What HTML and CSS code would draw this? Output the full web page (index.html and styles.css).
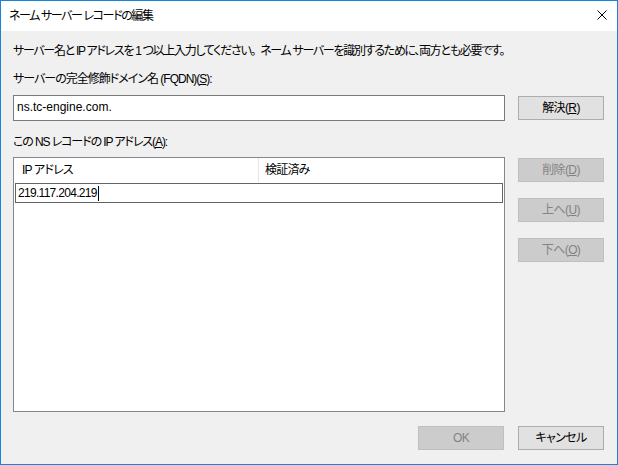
FILE: index.html
```html
<!DOCTYPE html>
<html lang="ja">
<head>
<meta charset="utf-8">
<link rel="stylesheet" href="styles.css">
</head>
<body>
<div class="window">
  <div class="titlebar">
    <span class="title">ネーム サーバー レコードの編集</span>
    <span class="close">
      <svg width="10" height="10" viewBox="0 0 10 10"><path d="M0.5 0.5 L9.5 9.5 M9.5 0.5 L0.5 9.5" stroke="#000" stroke-width="1" fill="none"/></svg>
    </span>
  </div>
  <div class="content">
    <div class="desc">サーバー名と IP アドレスを 1 つ以上入力してください<span class="kuten">。</span>ネーム サーバーを識別するために、両方とも必要です。</div>
    <div class="label label-fqdn">サーバーの完全修飾ドメイン名 (FQDN)(<u>S</u>):</div>
    <div class="row">
      <div class="textbox">ns.tc-engine.com.</div>
      <button class="btn btn-resolve">解決(<u>R</u>)</button>
    </div>
    <div class="label label-ip">この NS レコードの IP アドレス(<u>A</u>):</div>
    <div class="row row-list">
      <div class="listview">
        <div class="lv-header">
          <div class="col col-ip">IP アドレス</div>
          <div class="col col-ver">検証済み</div>
        </div>
        <div class="lv-edit"><span>219.117.204.219</span><span class="caret"></span></div>
      </div>
      <div class="side-buttons">
        <button class="btn disabled">削除(<u>D</u>)</button>
        <button class="btn disabled">上へ(<u>U</u>)</button>
        <button class="btn disabled">下へ(<u>O</u>)</button>
      </div>
    </div>
    <div class="footer">
      <button class="btn disabled">OK</button>
      <button class="btn">キャンセル</button>
    </div>
  </div>
</div>
</body>
</html>
```

FILE: styles.css
```css
* { box-sizing: border-box; }
html, body { margin: 0; padding: 0; background: #fff; }
body {
  font-family: "Liberation Sans", "Noto Sans CJK JP", sans-serif;
  font-size: 12px;
  font-feature-settings: "palt";
  letter-spacing: -0.4px;
  color: #000;
}
.window {
  width: 618px;
  height: 465px;
  border: 1px solid #1883d7;
  display: flex;
  flex-direction: column;
  background: #f0f0f0;
}
.titlebar {
  height: 30px;
  background: #fff;
  display: flex;
  align-items: center;
  justify-content: space-between;
  padding: 0 10px 0 8px;
}
.title { line-height: 16px; margin-top: -1px; letter-spacing: -1.4px; }
.close { display: flex; width: 10px; height: 10px; margin-top: -2px; }
.content {
  flex: 1;
  padding: 12px 13px 0 12px;
  display: flex;
  flex-direction: column;
}
.desc { line-height: 16px; height: 16px; white-space: nowrap; letter-spacing: -1.3px; }
.kuten { margin-right: 5px; }
.label { line-height: 16px; height: 16px; white-space: nowrap; letter-spacing: -1px; }
.label-fqdn { margin-top: 12px; }
.row { display: flex; justify-content: space-between; align-items: flex-start; }
.label-fqdn + .row { margin-top: 8px; }
.textbox {
  width: 492px;
  height: 26px;
  background: #fff;
  border: 1px solid #7a7a7a;
  padding: 0 3px;
  line-height: 23px;
  letter-spacing: 0;
}
.btn {
  font: inherit;
  font-feature-settings: "palt";
  letter-spacing: -0.6px;
  width: 86px;
  height: 24px;
  background: #e1e1e1;
  border: 1px solid #adadad;
  color: #000;
  padding: 0;
  line-height: 20px;
  text-align: center;
}
.btn.disabled {
  background: #cccccc;
  border-color: #bfbfbf;
  color: #838383;
}
.btn-resolve { margin-top: 1px; }
.label-ip { margin-top: 13px; letter-spacing: -1.1px; }
.row-list { margin-top: 7px; }
.listview {
  width: 492px;
  height: 255px;
  background: #fff;
  border: 1px solid #828790;
  padding: 0 1px;
}
.lv-header { display: flex; height: 25px; }
.col { line-height: 24px; padding-left: 7px; letter-spacing: -0.8px; }
.col-ip { width: 244px; border-right: 1px solid #e5e5e5; height: 24px; }
.col-ver { flex: 1; padding-left: 6px; }
.lv-edit {
  height: 20px;
  border: 1px solid #646464;
  padding-left: 2px;
  line-height: 18px;
  display: flex;
  align-items: center;
  letter-spacing: -0.7px;
}
.caret {
  display: inline-block;
  width: 1px;
  height: 15px;
  background: #000;
  margin-left: 1px;
}
.side-buttons {
  display: flex;
  flex-direction: column;
  gap: 16px;
  padding-top: 1px;
}
.footer {
  margin-top: 14px;
  display: flex;
  justify-content: flex-end;
  gap: 14px;
}
```
